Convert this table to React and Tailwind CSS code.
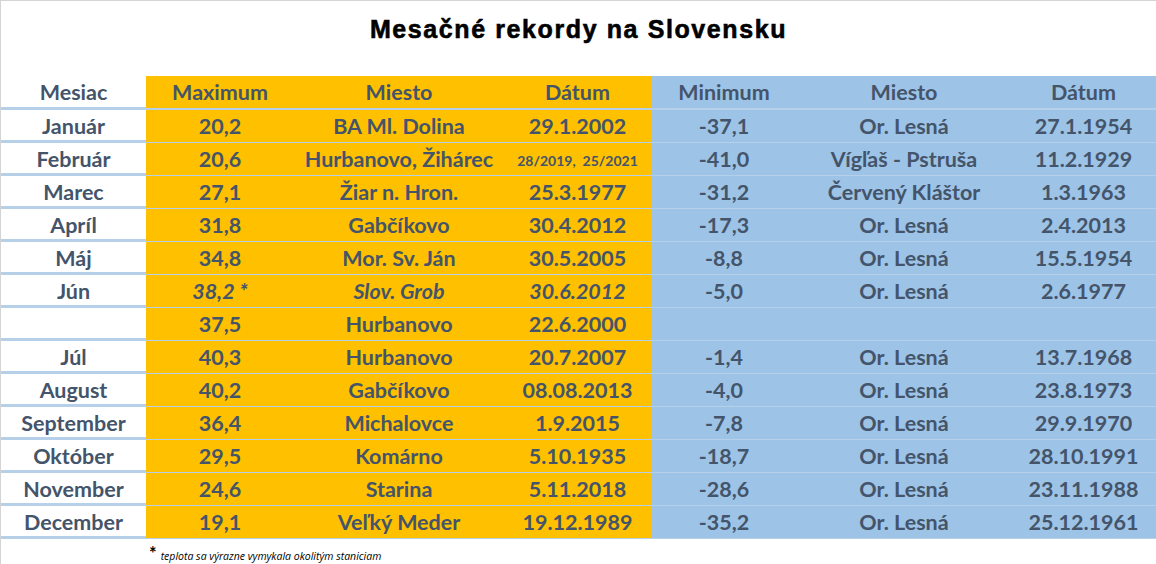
import React from 'react';

const rows = [
  { m: 'Január', max: '20,2', maxAt: 'BA Ml. Dolina', maxDate: '29.1.2002', min: '-37,1', minAt: 'Or. Lesná', minDate: '27.1.1954' },
  { m: 'Február', max: '20,6', maxAt: 'Hurbanovo, Žihárec', maxDate: '28/2019,  25/2021', small: true, min: '-41,0', minAt: 'Vígľaš - Pstruša', minDate: '11.2.1929' },
  { m: 'Marec', max: '27,1', maxAt: 'Žiar n. Hron.', maxDate: '25.3.1977', min: '-31,2', minAt: 'Červený Kláštor', minDate: '1.3.1963' },
  { m: 'Apríl', max: '31,8', maxAt: 'Gabčíkovo', maxDate: '30.4.2012', min: '-17,3', minAt: 'Or. Lesná', minDate: '2.4.2013' },
  { m: 'Máj', max: '34,8', maxAt: 'Mor. Sv. Ján', maxDate: '30.5.2005', min: '-8,8', minAt: 'Or. Lesná', minDate: '15.5.1954' },
  { m: 'Jún', max: '38,2 *', maxAt: 'Slov. Grob', maxDate: '30.6.2012', italic: true, min: '-5,0', minAt: 'Or. Lesná', minDate: '2.6.1977' },
  { m: '', max: '37,5', maxAt: 'Hurbanovo', maxDate: '22.6.2000', min: '', minAt: '', minDate: '' },
  { m: 'Júl', max: '40,3', maxAt: 'Hurbanovo', maxDate: '20.7.2007', min: '-1,4', minAt: 'Or. Lesná', minDate: '13.7.1968' },
  { m: 'August', max: '40,2', maxAt: 'Gabčíkovo', maxDate: '08.08.2013', min: '-4,0', minAt: 'Or. Lesná', minDate: '23.8.1973' },
  { m: 'September', max: '36,4', maxAt: 'Michalovce', maxDate: '1.9.2015', min: '-7,8', minAt: 'Or. Lesná', minDate: '29.9.1970' },
  { m: 'Október', max: '29,5', maxAt: 'Komárno', maxDate: '5.10.1935', min: '-18,7', minAt: 'Or. Lesná', minDate: '28.10.1991' },
  { m: 'November', max: '24,6', maxAt: 'Starina', maxDate: '5.11.2018', min: '-28,6', minAt: 'Or. Lesná', minDate: '23.11.1988' },
  { m: 'December', max: '19,1', maxAt: 'Veľký Meder', maxDate: '19.12.1989', min: '-35,2', minAt: 'Or. Lesná', minDate: '25.12.1961' },
];

const grid = 'grid grid-cols-[145px_148px_210px_147px_146px_214px_145px]';
const cell = 'flex items-center justify-center whitespace-nowrap';

export default function App() {
  return (
    <div
      className="w-[1156px] h-[564px] bg-white border-l border-t border-[#d4d4d4] text-[#44546a] overflow-hidden"
      style={{ fontFamily: 'Lato, "Open Sans", sans-serif' }}
    >
      {/* nadpis */}
      <div className="h-[75px] flex justify-center pt-[10px]">
        <h1
          className="text-[25px] font-black text-black tracking-[1.6px] [-webkit-text-stroke:0.6px_black]"
          style={{ fontFamily: '"Liberation Sans", Arial, sans-serif' }}
        >
          Mesačné rekordy na Slovensku
        </h1>
      </div>

      {/* hlavička */}
      <div className={`${grid} h-[34px] border-b-[3px] border-[#b6d0ea] text-[21.5px] font-bold`}>
        <div className={cell}>Mesiac</div>
        <div className={`${cell} bg-[#ffc000]`}>Maximum</div>
        <div className={`${cell} bg-[#ffc000]`}>Miesto</div>
        <div className={`${cell} bg-[#ffc000]`}>Dátum</div>
        <div className={`${cell} bg-[#9dc3e6]`}>Minimum</div>
        <div className={`${cell} bg-[#9dc3e6]`}>Miesto</div>
        <div className={`${cell} bg-[#9dc3e6]`}>Dátum</div>
      </div>

      {/* riadky */}
      {rows.map((r, i) => (
        <div key={i} className={`${grid} h-[33px] border-b-[3px] border-[#b6d0ea] text-[21.5px] font-bold`}>
          <div className={cell}>{r.m}</div>
          <div className={`${cell} bg-[#ffc000] ${r.italic ? 'italic' : ''}`}>{r.max}</div>
          <div className={`${cell} bg-[#ffc000] ${r.italic ? 'italic' : ''}`}>{r.maxAt}</div>
          <div className={`${cell} bg-[#ffc000] ${r.italic ? 'italic' : ''} ${r.small ? 'text-[14px] pt-[3px] whitespace-pre' : ''}`}>
            {r.maxDate}
          </div>
          <div className={`${cell} bg-[#9dc3e6]`}>{r.min}</div>
          <div className={`${cell} bg-[#9dc3e6]`}>{r.minAt}</div>
          <div className={`${cell} bg-[#9dc3e6]`}>{r.minDate}</div>
        </div>
      ))}

      {/* poznámka */}
      <div className="flex items-start pl-[148px] pt-[5px] text-black">
        <span className="text-[18px] font-bold leading-none">*</span>
        <span
          className="text-[10.5px] italic ml-[4px] mt-[7px] leading-none"
          style={{ fontFamily: '"Open Sans", sans-serif' }}
        >
          teplota sa výrazne vymykala okolitým staniciam
        </span>
      </div>
    </div>
  );
}
